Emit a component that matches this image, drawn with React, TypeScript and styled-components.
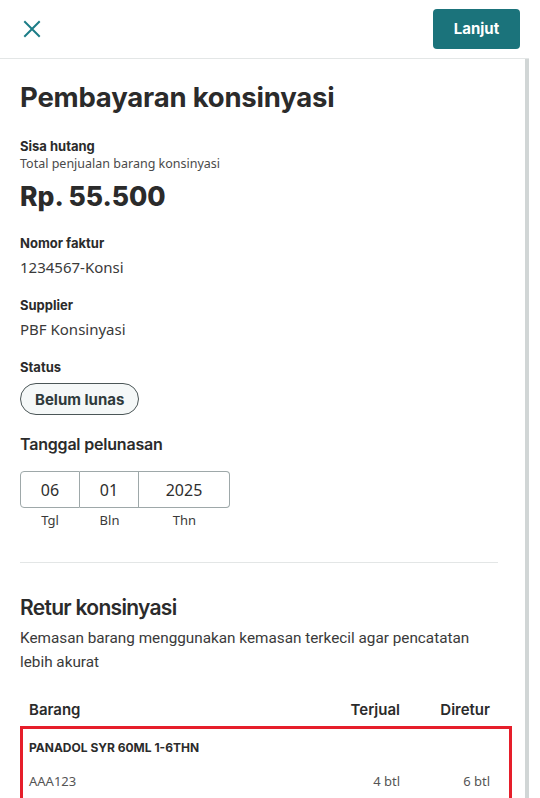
import React from "react";
import styled, { createGlobalStyle } from "styled-components";

const GlobalStyle = createGlobalStyle`
  html, body {
    margin: 0;
    padding: 0;
    background: #ffffff;
  }
  body {
    font-family: "Noto Sans", "Lato", sans-serif;
    color: #2e2e2e;
  }
  * {
    box-sizing: border-box;
  }
`;

const Page = styled.div`
  width: 529px;
  height: 798px;
  display: flex;
  flex-direction: column;
  overflow: hidden;
`;

const Header = styled.header`
  height: 59px;
  flex-shrink: 0;
  display: flex;
  align-items: center;
  justify-content: space-between;
  padding: 0 9px 0 20px;
  border-bottom: 1px solid #e3e6e6;
`;

const CloseButton = styled.button`
  width: 24px;
  height: 24px;
  padding: 0;
  border: none;
  background: transparent;
  display: flex;
  align-items: center;
  justify-content: center;
  color: #1c7d87;
  cursor: pointer;
`;

const PrimaryButton = styled.button`
  width: 87px;
  height: 40px;
  margin-top: -1px;
  border: none;
  border-radius: 4px;
  background: #1b737b;
  color: #ffffff;
  font-family: "Inter", sans-serif;
  font-weight: 700;
  font-size: 15px;
  cursor: pointer;
`;

const Body = styled.main`
  flex: 1;
  display: flex;
  flex-direction: column;
  padding: 22px 27px 0 20px;
  border-right: 4px solid #d1d6d6;
  overflow: hidden;
`;

const Title = styled.h1`
  margin: 0;
  font-family: "Inter", sans-serif;
  font-weight: 700;
  font-size: 27.5px;
  line-height: 32px;
  color: #2b2b2b;
  letter-spacing: -0.2px;
`;

const Field = styled.div<{ $gap?: number }>`
  display: flex;
  flex-direction: column;
  margin-top: ${(p) => p.$gap ?? 0}px;
`;

const Label = styled.div`
  font-family: "Inter", sans-serif;
  font-weight: 700;
  font-size: 13px;
  line-height: 18px;
  color: #2b2b2b;
`;

const Hint = styled.div`
  font-size: 12.5px;
  line-height: 18px;
  color: #4a4a4a;
`;

const Amount = styled.div`
  margin-top: 7px;
  font-family: "Inter", sans-serif;
  font-weight: 800;
  font-size: 26.5px;
  line-height: 32px;
  color: #2b2b2b;
`;

const Value = styled.div`
  margin-top: 4px;
  font-size: 15px;
  line-height: 22px;
  color: #3a3a3a;
`;

const Chip = styled.span`
  align-self: flex-start;
  margin-top: 7px;
  height: 32px;
  padding: 0 14px;
  display: inline-flex;
  align-items: center;
  border: 1px solid #4b5657;
  border-radius: 16px;
  background: #f5f8f8;
  font-family: "Inter", sans-serif;
  font-weight: 700;
  font-size: 15px;
  color: #2f3a3b;
`;

const SubHeading = styled.div`
  margin-top: 18px;
  font-family: "Inter", sans-serif;
  font-weight: 600;
  font-size: 16px;
  line-height: 22px;
  letter-spacing: -0.2px;
  color: #2b2b2b;
`;

const DateGrid = styled.div`
  margin-top: 16px;
  display: grid;
  grid-template-columns: 60px 59px 91px;
  width: 210px;
`;

const DateCell = styled.div<{ $first?: boolean; $last?: boolean }>`
  height: 37px;
  display: flex;
  align-items: center;
  justify-content: center;
  border: 1px solid #9ea8a9;
  border-left-width: ${(p) => (p.$first ? 1 : 0)}px;
  border-radius: ${(p) =>
    p.$first ? "4px 0 0 4px" : p.$last ? "0 4px 4px 0" : "0"};
  font-size: 16px;
  color: #2e2e2e;
`;

const DateCaption = styled.div`
  margin-top: 3px;
  text-align: center;
  font-size: 13px;
  line-height: 18px;
  color: #3a3a3a;
`;

const Divider = styled.hr`
  margin: 33px 0 0;
  border: none;
  border-top: 1px solid #e3e6e6;
`;

const SectionTitle = styled.h2`
  margin: 31px 0 0;
  font-family: "Inter", sans-serif;
  font-weight: 600;
  font-size: 21px;
  line-height: 28px;
  letter-spacing: -0.7px;
  color: #2b2b2b;
`;

const Paragraph = styled.p`
  margin: 4px 0 0;
  font-family: "Roboto", "Noto Sans", sans-serif;
  font-size: 15.3px;
  line-height: 24px;
  color: #3a3a3a;
`;

const Table = styled.div`
  margin: 25px -14px 0 0;
  display: flex;
  flex-direction: column;
`;

const TableRow = styled.div`
  display: grid;
  grid-template-columns: 1fr 90px 90px;
  padding: 0 22px 0 9px;
`;

const HeadCell = styled.div<{ $right?: boolean }>`
  font-family: "Inter", sans-serif;
  font-weight: 600;
  font-size: 15px;
  line-height: 22px;
  color: #2b2b2b;
  text-align: ${(p) => (p.$right ? "right" : "left")};
`;

const ItemCard = styled.div`
  margin-top: 5px;
  border: 3px solid #e61e2a;
  padding: 11px 19px 8px 6px;
  display: flex;
  flex-direction: column;
  gap: 16px;
`;

const ItemName = styled.div`
  font-family: "Inter", sans-serif;
  font-weight: 700;
  font-size: 12px;
  line-height: 16px;
  color: #2b2b2b;
`;

const ItemLine = styled.div`
  display: grid;
  grid-template-columns: 1fr 90px 90px;
`;

const ItemCell = styled.div<{ $right?: boolean }>`
  font-size: 13px;
  line-height: 18px;
  color: #555555;
  text-align: ${(p) => (p.$right ? "right" : "left")};
`;

const dateParts = [
  { value: "06", caption: "Tgl" },
  { value: "01", caption: "Bln" },
  { value: "2025", caption: "Thn" },
];

export default function App() {
  return (
    <Page>
      <GlobalStyle />
      <Header>
        <CloseButton aria-label="Tutup">
          <svg width="18" height="18" viewBox="0 0 18 18" fill="none">
            <path
              d="M2 2L16 16M16 2L2 16"
              stroke="currentColor"
              strokeWidth="2"
              strokeLinecap="square"
            />
          </svg>
        </CloseButton>
        <PrimaryButton>Lanjut</PrimaryButton>
      </Header>
      <Body>
        <Title>Pembayaran konsinyasi</Title>

        <Field $gap={24}>
          <Label>Sisa hutang</Label>
          <Hint>Total penjualan barang konsinyasi</Hint>
          <Amount>Rp. 55.500</Amount>
        </Field>

        <Field $gap={22}>
          <Label>Nomor faktur</Label>
          <Value>1234567-Konsi</Value>
        </Field>

        <Field $gap={18}>
          <Label>Supplier</Label>
          <Value>PBF Konsinyasi</Value>
        </Field>

        <Field $gap={18}>
          <Label>Status</Label>
          <Chip>Belum lunas</Chip>
        </Field>

        <SubHeading>Tanggal pelunasan</SubHeading>
        <DateGrid>
          {dateParts.map((d, i) => (
            <DateCell key={d.caption} $first={i === 0} $last={i === dateParts.length - 1}>
              {d.value}
            </DateCell>
          ))}
          {dateParts.map((d) => (
            <DateCaption key={d.caption + "-c"}>{d.caption}</DateCaption>
          ))}
        </DateGrid>

        <Divider />

        <SectionTitle>Retur konsinyasi</SectionTitle>
        <Paragraph>
          Kemasan barang menggunakan kemasan terkecil agar pencatatan lebih akurat
        </Paragraph>

        <Table>
          <TableRow>
            <HeadCell>Barang</HeadCell>
            <HeadCell $right>Terjual</HeadCell>
            <HeadCell $right>Diretur</HeadCell>
          </TableRow>
          <ItemCard>
            <ItemName>PANADOL SYR 60ML 1-6THN</ItemName>
            <ItemLine>
              <ItemCell>AAA123</ItemCell>
              <ItemCell $right>4 btl</ItemCell>
              <ItemCell $right>6 btl</ItemCell>
            </ItemLine>
          </ItemCard>
        </Table>
      </Body>
    </Page>
  );
}
